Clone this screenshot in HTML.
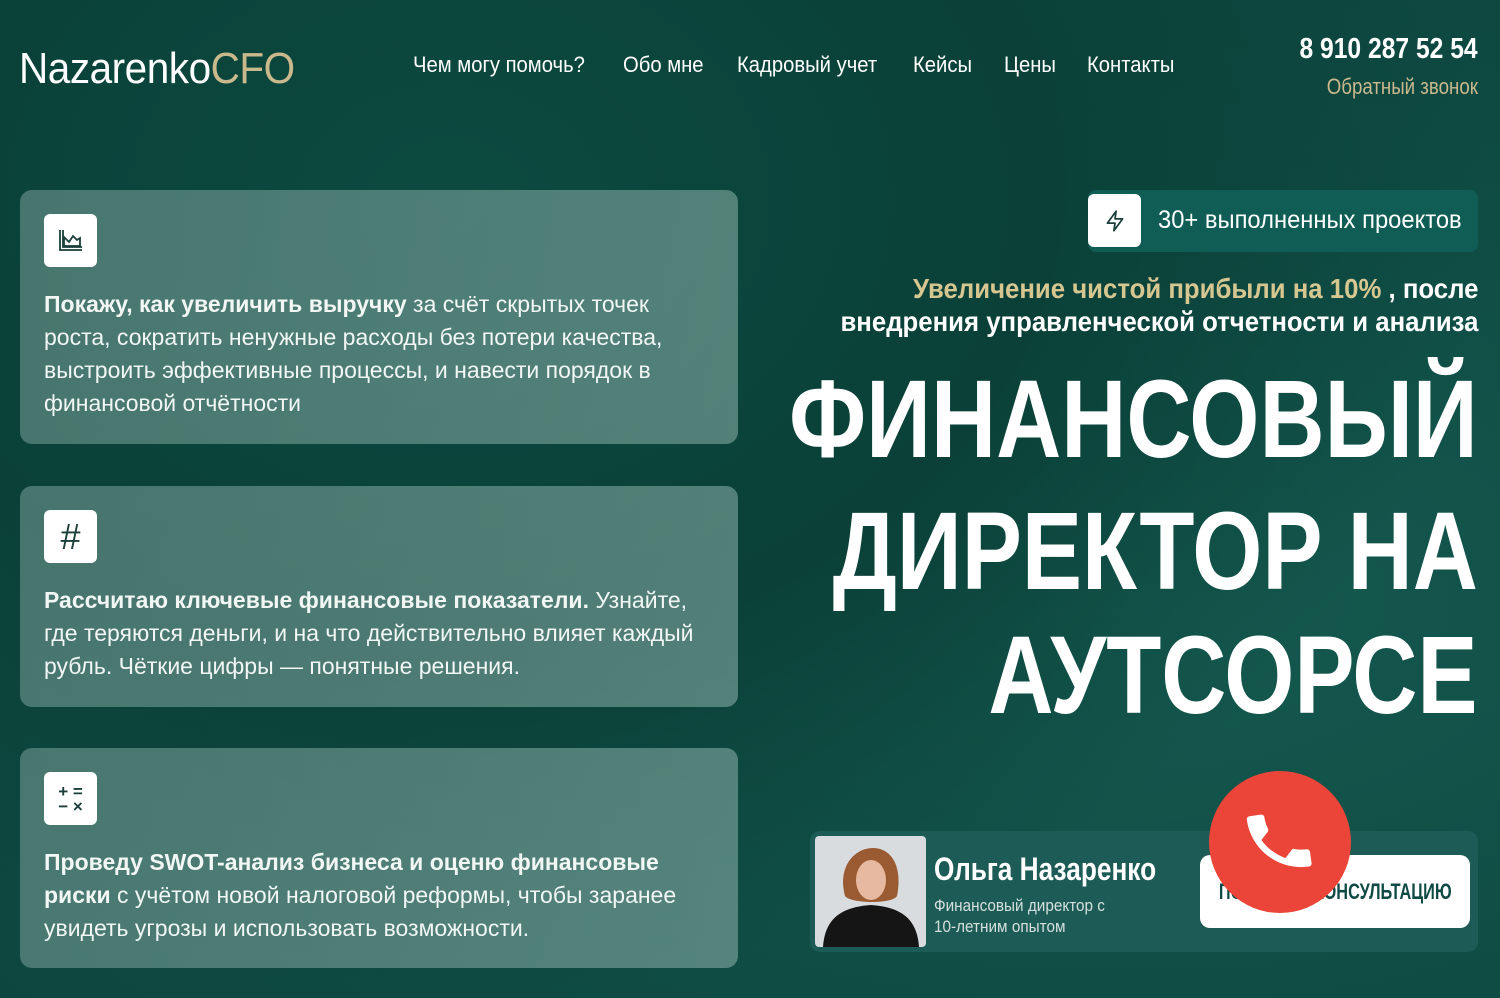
<!DOCTYPE html>
<html><head><meta charset="utf-8"><style>
*{margin:0;padding:0;box-sizing:border-box}
body{width:1500px;height:998px;overflow:hidden;font-family:"Liberation Sans",sans-serif;color:#fff;
background:radial-gradient(ellipse at 30% 20%,#0c4a40 0%,#0a4038 40%,transparent 70%),radial-gradient(ellipse at 75% 60%,#155a50 0%,#0f4c44 50%,#0c443c 100%);position:relative}
.abs{position:absolute}
.logo{left:19px;top:44px;font-size:44px;letter-spacing:-0.5px;transform:scaleX(0.92);transform-origin:left;font-weight:300}
.logo span{color:#c9b98c}
.nav{top:52px;font-size:22px;transform:scaleX(0.92);transform-origin:left;white-space:nowrap}
.phone{right:22px;top:33px;font-size:29px;font-weight:bold;transform:scaleX(0.85);transform-origin:right;white-space:nowrap}
.cb{right:22px;top:74px;font-size:22px;color:#c9b98c;transform:scaleX(0.85);transform-origin:right;white-space:nowrap}
.card{left:20px;width:718px;border-radius:12px;background:linear-gradient(100deg,rgba(120,160,152,0.55),rgba(130,170,162,0.6));}
.ic{position:absolute;left:24px;top:24px;width:53px;height:53px;background:#fff;border-radius:6px;display:flex;align-items:center;justify-content:center;color:#1b3f3a}
.txt{position:absolute;left:24px;font-size:23px;line-height:33px;color:#f2f6f5;width:680px}
.badge{left:1088px;top:190px;width:390px;height:62px;background:#0f5d55;border-radius:8px}
.badge .b{position:absolute;left:0;top:4px;width:53px;height:53px;background:#fff;border-radius:6px;display:flex;align-items:center;justify-content:center}
.badge .t{position:absolute;left:70px;top:16px;font-size:25px;white-space:nowrap;transform:scaleX(0.95);transform-origin:left}
.sub{right:22px;top:272px;font-size:28px;font-weight:bold;line-height:33px;text-align:right;white-space:nowrap;transform:scaleX(0.92);transform-origin:right}
.sub span{color:#d6c690}
.h{right:22px;font-size:110px;font-weight:bold;white-space:nowrap;transform:scaleX(0.82);transform-origin:right;line-height:1}
.prof{left:810px;top:831px;width:668px;height:121px;background:#1d5b56;border-radius:10px}
.photo{position:absolute;left:5px;top:5px;width:111px;height:111px;border-radius:4px;background:#d9dcde;overflow:hidden}
.btn{left:1200px;top:855px;width:270px;height:73px;background:#fff;border-radius:10px;color:#0f4a44;font-weight:bold;font-size:22px;display:flex;align-items:center;justify-content:center;white-space:nowrap}
.btn span{display:inline-block;transform:scaleX(0.74)}
.red{left:1209px;top:771px;width:142px;height:142px;border-radius:50%;background:#ea4538;display:flex;align-items:center;justify-content:center}
</style></head><body>
<div class="abs logo">Nazarenko<span>CFO</span></div>
<div class="abs nav" style="left:413px">Чем могу помочь?</div>
<div class="abs nav" style="left:623px">Обо мне</div>
<div class="abs nav" style="left:737px">Кадровый учет</div>
<div class="abs nav" style="left:913px">Кейсы</div>
<div class="abs nav" style="left:1004px">Цены</div>
<div class="abs nav" style="left:1087px">Контакты</div>
<div class="abs phone">8 910 287 52 54</div>
<div class="abs cb">Обратный звонок</div>

<div class="abs card" style="top:190px;height:254px">
<div class="ic"><svg width="30" height="30" viewBox="0 0 30 30" fill="none" stroke="#1b3f3a" stroke-width="1.8"><path d="M4 4v20h22"/><path d="M7 4v17h19"/><path d="M8 20V11l5 5 4-6 4 4 3-2v8z"/></svg></div>
<div class="txt" style="top:98px;width:650px"><b>Покажу, как увеличить выручку</b> за счёт скрытых точек роста, сократить ненужные расходы без потери качества, выстроить эффективные процессы, и навести порядок в финансовой отчётности</div>
</div>
<div class="abs card" style="top:486px;height:221px">
<div class="ic" style="font-size:36px">#</div>
<div class="txt" style="top:98px"><b>Рассчитаю ключевые финансовые показатели.</b> Узнайте, где теряются деньги, и на что действительно влияет каждый рубль. Чёткие цифры — понятные решения.</div>
</div>
<div class="abs card" style="top:748px;height:220px">
<div class="ic" style="font-size:17px;font-weight:bold;line-height:15px;text-align:center">+ =<br>− ×</div>
<div class="txt" style="top:98px"><b>Проведу SWOT-анализ бизнеса и оценю финансовые риски</b> с учётом новой налоговой реформы, чтобы заранее увидеть угрозы и использовать возможности.</div>
</div>

<div class="abs badge"><div class="b"><svg width="26" height="26" viewBox="0 0 24 24" fill="none" stroke="#1b3f3a" stroke-width="1.6" stroke-linejoin="round"><path d="M13 3L5 14h7l-1 7 8-11h-7z"/></svg></div><div class="t">30+ выполненных проектов</div></div>
<div class="abs sub"><span>Увеличение чистой прибыли на 10%</span> , после<br>внедрения управленческой отчетности и анализа</div>
<div class="abs h" style="top:365px">ФИНАНСОВЫЙ</div>
<div class="abs h" style="top:497px">ДИРЕКТОР НА</div>
<div class="abs h" style="top:621px">АУТСОРСЕ</div>

<div class="abs prof"><div class="photo"><svg width="111" height="111" viewBox="0 0 111 111"><path d="M30 60c-8-30 10-48 28-48s30 18 24 48c-4 8-46 8-52 0z" fill="#9a5a32"/><ellipse cx="56" cy="44" rx="15" ry="20" fill="#e6b9a0"/><path d="M8 111c2-30 20-40 48-42 28 2 46 12 48 42z" fill="#151515"/></svg></div>
<div class="abs" style="left:124px;top:20px;font-size:32px;font-weight:bold;transform:scaleX(0.82);transform-origin:left;white-space:nowrap">Ольга Назаренко</div>
<div class="abs" style="left:124px;top:64px;font-size:17px;line-height:21px;color:#d5e0de;transform:scaleX(0.9);transform-origin:left;white-space:nowrap">Финансовый директор с<br>10-летним опытом</div>
</div>
<div class="abs btn"><span>ПОЛУЧИТЬ КОНСУЛЬТАЦИЮ</span></div>
<div class="abs red"><svg width="86" height="86" viewBox="0 0 24 24" style="transform:rotate(-8deg)"><path fill="#fff" d="M6.6 10.8c1.4 2.8 3.8 5.1 6.6 6.6l2.2-2.2c.3-.3.7-.4 1-.2 1.1.4 2.3.6 3.6.6.6 0 1 .4 1 1V20c0 .6-.4 1-1 1C10.6 21 3 13.4 3 4c0-.6.4-1 1-1h3.5c.6 0 1 .4 1 1 0 1.3.2 2.5.6 3.6.1.3 0 .7-.2 1z" transform="translate(1 1) scale(0.9)"/></svg></div>
</body></html>
